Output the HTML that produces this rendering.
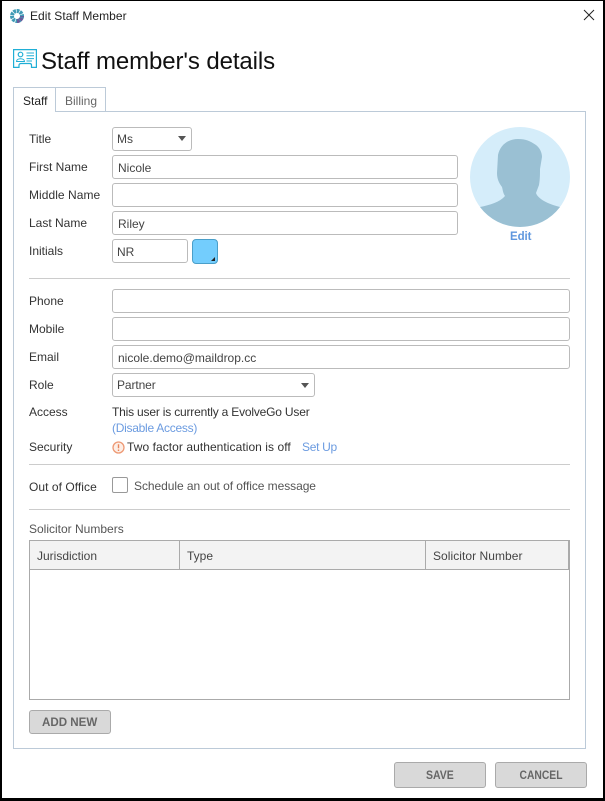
<!DOCTYPE html>
<html><head><meta charset="utf-8"><style>
html,body{margin:0;padding:0;background:#fff}
#p{position:relative;width:605px;height:801px;overflow:hidden;background:#fff;font-family:"Liberation Sans",sans-serif;font-size:12px;color:#333}
#p>*{position:absolute;box-sizing:border-box}
.t{white-space:nowrap;line-height:16px;height:16px}
.i{border:1px solid #bbb;border-radius:3px;background:#fff;height:24px;padding-left:5px;line-height:24px;color:#444}
.h{height:1px;background:#ccc;left:29px;width:541px}
.b{background:#d9d9d9;border:1px solid #aaa;border-radius:3px;text-align:center;font-weight:bold;color:#666;font-size:12px}
.b span{display:inline-block;transform-origin:center}
.l{color:#6b9be0}
</style></head><body><div id="p">
<div style="left:0;top:0;width:605px;height:801px;border:solid #000;border-width:1px 2px 3px 2px;z-index:5"></div>

<svg style="left:9px;top:8px" width="16" height="16" viewBox="0 0 16 16"><circle cx="8" cy="8" r="5" fill="none" stroke="#3f9ab5" stroke-width="4" stroke-dasharray="2.600 .7"/><path d="M8 13a5 5 0 0 0 5-5" fill="none" stroke="#6a5a9c" stroke-width="4" stroke-dasharray="2.600 .7"/></svg>
<div class="t" style="left:30px;top:8px;color:#222;letter-spacing:.05px">Edit Staff Member</div>
<svg style="left:583px;top:9px" width="12" height="12" viewBox="0 0 12 12"><path d="M1 1L11 11M11 1L1 11" stroke="#222" stroke-width="1" fill="none"/></svg>

<svg style="left:13px;top:49px" width="25" height="20" viewBox="0 0 25 20" fill="none" stroke="#20afd6" stroke-width="1.200"><path d="M.6 .6H23.400V18.400H18.500V16C18.500 15 17.500 14.500 16.500 14.500H8C7 14.500 6 15 6 16V18.400H.6Z"/><circle cx="7.500" cy="5.500" r="2.300"/><path d="M3.500 12.500C3.500 8.800 11.500 8.800 11.500 12.500ZM13.500 4H21M13.500 6.800H21M13.500 9.600H21M13.500 12H19" stroke-width="1"/></svg>
<div class="t" style="left:41px;top:47px;height:30px;line-height:30px;font-size:24px;color:#111;letter-spacing:-.1px">Staff member's details</div>

<div style="left:13px;top:111px;width:573px;height:638px;border:1px solid #bccad8"></div>
<div style="left:13px;top:87px;width:43px;height:25px;border:1px solid #bccad8;border-bottom:0;background:#fff"></div>
<div style="left:55px;top:87px;width:51px;height:24px;border:1px solid #bccad8;border-bottom:0;background:#fff"></div>
<div class="t" style="left:23px;top:93px;color:#222">Staff</div>
<div class="t" style="left:65px;top:93px;color:#666">Billing</div>

<div class="t" style="left:29px;top:131px">Title</div>
<div class="t" style="left:29px;top:159px">First Name</div>
<div class="t" style="left:29px;top:187px;letter-spacing:.05px">Middle Name</div>
<div class="t" style="left:29px;top:215px">Last Name</div>
<div class="t" style="left:29px;top:243px">Initials</div>

<div class="i" style="left:112px;top:127px;width:80px;padding-left:4px;line-height:22px">Ms</div>
<div style="left:178px;top:136px;width:0;height:0;border:4px solid transparent;border-top:5px solid #555;border-bottom:0"></div>
<div class="i" style="left:112px;top:155px;width:346px">Nicole</div>
<div class="i" style="left:112px;top:183px;width:346px"></div>
<div class="i" style="left:112px;top:211px;width:346px">Riley</div>
<div class="i" style="left:112px;top:239px;width:76px;padding-left:4px">NR</div>
<div style="left:192px;top:239px;width:26px;height:25px;background:#73cdfd;border:1px solid #4a9fc9;border-radius:4px"></div>
<div style="left:211px;top:257px;width:0;height:0;border-style:solid;border-width:0 0 4px 4px;border-color:transparent transparent #222 transparent"></div>

<svg style="left:470px;top:127px" width="100" height="100" viewBox="0 0 100 100"><circle cx="50" cy="50" r="50" fill="#d5edfa"/><path d="M10 80C20 78 30 75 35 69C33 66 33 64 32 60C29 56 27 52 27 46L28 28C30 18 38 12 48 12C56 12 60 14 66 18C70 21 72 26 72 30L70 42C70 48 70 52 69 58L66 66C68 72 78 77 90 80A50 50 0 0 1 10 80Z" fill="#9ac0d3"/></svg>
<div class="t" style="left:510px;top:229px;color:#5f97de;font-weight:bold;font-size:11.500px;letter-spacing:-.1px">Edit</div>

<div class="h" style="top:278px"></div>
<div class="t" style="left:29px;top:293px">Phone</div>
<div class="t" style="left:29px;top:321px">Mobile</div>
<div class="t" style="left:29px;top:349px">Email</div>
<div class="t" style="left:29px;top:377px">Role</div>
<div class="t" style="left:29px;top:404px">Access</div>
<div class="t" style="left:29px;top:439px">Security</div>

<div class="i" style="left:112px;top:289px;width:458px"></div>
<div class="i" style="left:112px;top:317px;width:458px"></div>
<div class="i" style="left:112px;top:345px;width:458px">nicole.demo@maildrop.cc</div>
<div class="i" style="left:112px;top:373px;width:203px;padding-left:4px;letter-spacing:-.1px;line-height:22px">Partner</div>
<div style="left:301px;top:383px;width:0;height:0;border:4px solid transparent;border-top:5px solid #555;border-bottom:0"></div>

<div class="t" style="left:112px;top:404px;letter-spacing:-.19px">This user is currently a EvolveGo User</div>
<div class="t l" style="left:112px;top:420px;letter-spacing:-.27px">(Disable Access)</div>
<svg style="left:112px;top:441px" width="13" height="13" viewBox="0 0 13 13"><circle cx="6.500" cy="6.500" r="5.500" fill="#fdeee6" stroke="#ee9a75" stroke-width="1.300"/><path d="M6.500 3.200V7.300M6.500 8.500V10" stroke="#e8855c" stroke-width="1.400"/></svg>
<div class="t" style="left:127px;top:439px;letter-spacing:.06px">Two factor authentication is off</div>
<div class="t l" style="left:302px;top:439px;letter-spacing:-.3px">Set Up</div>

<div class="h" style="top:464px"></div>
<div class="t" style="left:29px;top:479px;letter-spacing:.05px">Out of Office</div>
<div style="left:112px;top:477px;width:16px;height:16px;border:1px solid #999;border-radius:2px;background:#fff"></div>
<div class="t" style="left:134px;top:478px;color:#555;letter-spacing:-.06px">Schedule an out of office message</div>
<div class="h" style="top:509px"></div>

<div class="t" style="left:29px;top:521px;color:#555">Solicitor Numbers</div>
<div style="left:29px;top:540px;width:541px;height:160px;border:1px solid #aaa;background:#fff"></div>
<div style="left:30px;top:541px;width:539px;height:29px;background:#f3f3f3;border-bottom:1px solid #aaa;border-right:1px solid #aaa"></div>
<div style="left:179px;top:541px;width:1px;height:29px;background:#aaa"></div>
<div style="left:425px;top:541px;width:1px;height:29px;background:#aaa"></div>
<div class="t" style="left:37px;top:548px;color:#444">Jurisdiction</div>
<div class="t" style="left:187px;top:548px;color:#444">Type</div>
<div class="t" style="left:433px;top:548px;color:#444;letter-spacing:.05px">Solicitor Number</div>

<div class="b" style="left:29px;top:710px;width:82px;height:24px;line-height:22px"><span style="transform:scaleX(.965)">ADD NEW</span></div>
<div class="b" style="left:394px;top:762px;width:92px;height:26px;line-height:24px"><span style="transform:scaleX(.875)">SAVE</span></div>
<div class="b" style="left:495px;top:762px;width:92px;height:26px;line-height:24px"><span style="transform:scaleX(.86)">CANCEL</span></div>
</div></body></html>
